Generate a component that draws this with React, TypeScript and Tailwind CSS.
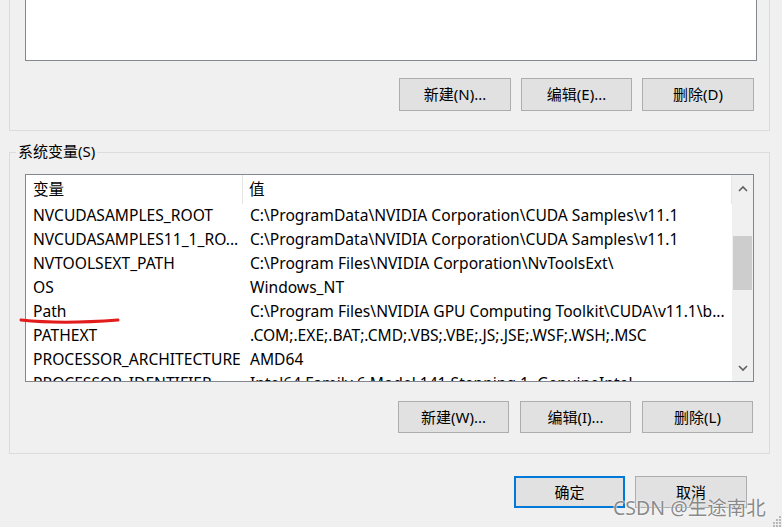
import React from "react";

const FONT = { fontFamily: '"Noto Sans", "Noto Sans CJK SC", sans-serif' };

function Btn({ label, className = "" }: { label: string; className?: string }) {
  return (
    <div
      className={`flex items-center justify-center bg-[#e1e1e1] border border-[#adadad] text-[15px] text-black ${className}`}
    >
      {label}
    </div>
  );
}

const rows: [string, string][] = [
  ["NVCUDASAMPLES_ROOT", "C:\\ProgramData\\NVIDIA Corporation\\CUDA Samples\\v11.1"],
  ["NVCUDASAMPLES11_1_RO...", "C:\\ProgramData\\NVIDIA Corporation\\CUDA Samples\\v11.1"],
  ["NVTOOLSEXT_PATH", "C:\\Program Files\\NVIDIA Corporation\\NvToolsExt\\"],
  ["OS", "Windows_NT"],
  ["Path", "C:\\Program Files\\NVIDIA GPU Computing Toolkit\\CUDA\\v11.1\\b..."],
  ["PATHEXT", ".COM;.EXE;.BAT;.CMD;.VBS;.VBE;.JS;.JSE;.WSF;.WSH;.MSC"],
  ["PROCESSOR_ARCHITECTURE", "AMD64"],
  ["PROCESSOR_IDENTIFIER", "Intel64 Family 6 Model 141 Stepping 1, GenuineIntel"],
];

export default function App() {
  return (
    <div
      className="relative w-[782px] h-[527px] overflow-hidden bg-[#f0f0f0] text-black"
      style={FONT}
    >
      {/* Group box 1 (user variables, cut off at top) */}
      <div className="ml-[9px] w-[761px] h-[131px] border-x border-b border-[#dcdcdc] flex flex-col">
        <div className="ml-[15px] w-[732px] h-[61px] bg-white border-x border-b border-[#828790]" />
        <div className="mt-[17px] flex justify-end gap-[10px] pr-[15px]">
          <Btn label="新建(N)..." className="w-[112px] h-[33px]" />
          <Btn label="编辑(E)..." className="w-[111px] h-[33px]" />
          <Btn label="删除(D)" className="w-[112px] h-[33px]" />
        </div>
      </div>

      {/* Group box 2 */}
      <div className="relative mt-[21px] ml-[9px] w-[761px] h-[302px] border border-[#dcdcdc]">
        <div className="absolute left-[6px] top-[-12px] px-[2px] bg-[#f0f0f0] text-[15px] leading-[20px]">
          系统变量(S)
        </div>
        <div className="ml-[15px] mt-[21px] w-[729px] h-[208px] bg-white border border-[#828790] flex overflow-hidden">
          <div className="flex-1 flex flex-col text-[15.6px] overflow-hidden">
            <div className="flex h-[28.5px] shrink-0 items-center">
              <div className="w-[217px] pl-[7px] h-full flex items-center border-r border-[#e5e5e5]">变量</div>
              <div className="flex-1 pl-[6px] h-full flex items-center border-r border-[#e5e5e5]">值</div>
            </div>
            {rows.map(([k, v]) => (
              <div key={k} className="flex h-[24px] shrink-0 items-center whitespace-nowrap">
                <div className="w-[217px] pl-[7px] shrink-0">{k}</div>
                <div className="flex-1 pl-[7px] overflow-hidden">{v}</div>
              </div>
            ))}
          </div>
          {/* scrollbar */}
          <div className="w-[21px] shrink-0 bg-[#f0f0f0] flex flex-col items-center">
            <div className="h-[26px] w-full flex items-center justify-center">
              <svg width="10" height="7" viewBox="0 0 10 7">
                <path d="M1 6 L5 2 L9 6" fill="none" stroke="#606060" strokeWidth="1.6" />
              </svg>
            </div>
            <div className="mt-[35px] w-[19px] h-[54px] bg-[#cdcdcd]" />
            <div className="flex-1" />
            <div className="h-[26px] w-full flex items-center justify-center">
              <svg width="10" height="7" viewBox="0 0 10 7">
                <path d="M1 1 L5 5 L9 1" fill="none" stroke="#606060" strokeWidth="1.6" />
              </svg>
            </div>
          </div>
        </div>
        <div className="mt-[19px] flex justify-end gap-[11px] pr-[16px]">
          <Btn label="新建(W)..." className="w-[111px] h-[32px]" />
          <Btn label="编辑(I)..." className="w-[111px] h-[32px]" />
          <Btn label="删除(L)" className="w-[111px] h-[32px]" />
        </div>
      </div>

      {/* Bottom buttons */}
      <div className="mt-[22px] flex justify-end gap-[10px] pr-[35px]">
        <Btn label="确定" className="w-[111px] h-[32px] !border-2 !border-[#0078d7]" />
        <Btn label="取消" className="w-[112px] h-[32px]" />
      </div>

      {/* red hand-drawn underline */}
      <svg className="absolute left-[19px] top-[316px]" width="102" height="10" viewBox="0 0 102 10">
        <path d="M2 4 C 30 7, 60 7, 99 4" fill="none" stroke="#e21b1b" strokeWidth="3" strokeLinecap="round" />
      </svg>

      {/* watermark */}
      <div
        className="absolute left-[613px] top-[495px] text-[19.5px] leading-[26px] text-[#8a8a8a] whitespace-nowrap"
        style={{ textShadow: "0 0 1px #fff, 0 0 2px #fff" }}
      >
        CSDN @生途南北
      </div>

      {/* resize grip */}
      <svg className="absolute right-0 bottom-0" width="11" height="11" viewBox="0 0 11 11">
        {[
          [8, 0], [8, 3], [5, 3], [8, 6], [5, 6], [2, 6], [8, 9], [5, 9], [2, 9],
        ].map(([x, y], i) => (
          <rect key={i} x={x} y={y} width="2" height="2" fill="#b8b8b8" />
        ))}
      </svg>
    </div>
  );
}
